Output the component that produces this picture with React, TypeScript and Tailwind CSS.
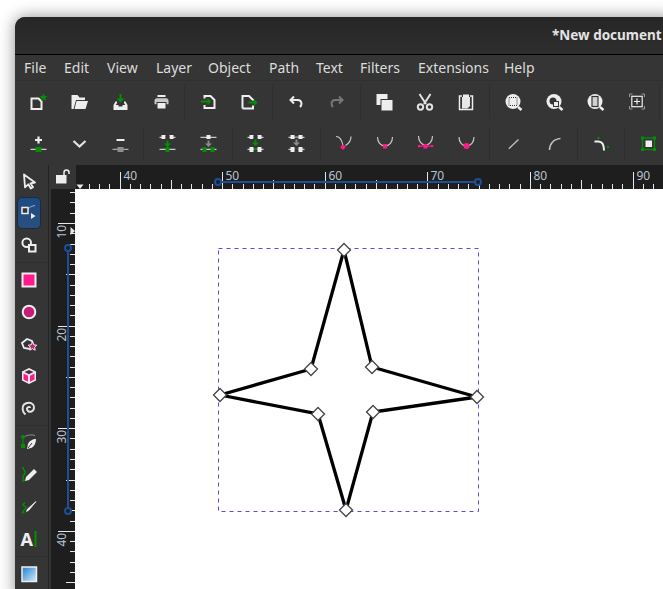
import React from "react";

const W = "#eeeeee";
const G = "#009000";
const P = "#ff1a8c";
const D = "#353535";

function Ic({ children }: { children: React.ReactNode }) {
  return (
    <svg width="24" height="24" viewBox="0 0 24 24" fill="none" className="block overflow-visible">
      {children}
    </svg>
  );
}

function Btn({ children }: { children: React.ReactNode }) {
  return <div className="w-[41px] h-[42px] shrink-0 flex items-center justify-center"><Ic>{children}</Ic></div>;
}

function Sep({ w = "w-[6px]" }: { w?: string }) {
  return (
    <div className={`${w} h-[42px] shrink-0 flex items-center justify-center`}>
      <div className="w-px h-[34px] bg-[#2e2e2e]" />
    </div>
  );
}

function Tool({ children, active }: { children: React.ReactNode; active?: boolean }) {
  return (
    <div className="w-[28px] h-[32px] flex items-center justify-center">
      {active ? (
        <div className="w-[24px] h-[32px] rounded-[5px] border border-[#1a2a40] bg-linear-to-b from-[#1d4a85] to-[#2a4f7d] flex items-center justify-center">
          <Ic>{children}</Ic>
        </div>
      ) : (
        <Ic>{children}</Ic>
      )}
    </div>
  );
}

function ToolSep() {
  return (
    <div className="h-[3px] flex items-center">
      <div className="w-[33px] h-px bg-[#2f2f2f]" />
    </div>
  );
}

const TopLine = ({ x = 3.5 }: { x?: number }) => <rect x={x} y="4.8" width="16" height="1" fill={W} />;
const BotLine = ({ x = 3.5 }: { x?: number }) => <rect x={x} y="16.8" width="16" height="1" fill={W} />;
const DownArrow = ({ fill }: { fill: string }) => <path d="M10.500 8.500h2v3h2.500l-3.500 3.500-3.500-3.500h2.500z" fill={fill} />;

const row1: (React.ReactNode | "sep")[] = [
  <g>
    <path d="M5.500 8.500h7l3 3v7.500h-10z" stroke={W} strokeWidth="2" />
    <path d="M17.500 3.500l1.100 2.600 2.800.2-2.100 1.800.7 2.700-2.500-1.500-2.500 1.500.7-2.700-2.100-1.800 2.800-.2z" fill={G} />
  </g>,
  <g fill={W}>
    <path d="M4.500 5h6l2 2.500h5.500V10H9L6.500 19h-2z" />
    <path d="M9.500 11h11.500l-2.500 8H7.500z" />
  </g>,
  <g>
    <path fillRule="evenodd" d="M5.500 15l2-3.500H9V13l-1.300 2h2.800v1.500h4V15h2.800L16 13v-1.500h1.500l2 3.500v5h-14z" fill={W} />
    <path d="M11.500 4h2v4.500h3l-4 4-4-4h3z" fill={G} />
  </g>,
  <g>
    <rect x="8.500" y="5" width="8" height="2" fill={W} />
    <path d="M5.500 10l1.500-1.700h11l1.500 1.700v4.300h-14z" fill="#c8c8c8" />
    <rect x="7.500" y="12" width="10" height="7" fill={D} />
    <rect x="8.500" y="13" width="8" height="5.500" fill={W} />
  </g>,
  "sep",
  <g>
    <path d="M8.500 8.500V6h6l4 4v8h-10v-3" stroke={W} strokeWidth="2" />
    <path d="M5 10.500h6.500V8l3.500 3.500-3.500 3.500v-2.500H5z" fill={G} />
  </g>,
  <g>
    <path d="M5.500 18.500V6h6.500l4 4v.5M16 15.500v3h-10.500" stroke={W} strokeWidth="2" />
    <path d="M11.500 11.500h5.500V9l3.500 3.500-3.500 3.500v-2.500h-5.500z" fill={G} />
  </g>,
  "sep",
  <g stroke={W} strokeWidth="2">
    <path d="M10 6.500L6.500 10l3.500 3.500" />
    <path d="M7 10h6.500a4 4 0 0 1 4 3.500c0 1.500-.5 2.500-1.500 3.500" />
  </g>,
  <g stroke="#777" strokeWidth="2">
    <path d="M14 6.500l3.500 3.500-3.500 3.500" />
    <path d="M17 10h-6.500a4 4 0 0 0-4 3.500c0 1.500.5 2.500 1.500 3.500" />
  </g>,
  "sep",
  <g>
    <rect x="4.500" y="4" width="11" height="11" fill={W} />
    <rect x="8.500" y="9" width="12" height="11.500" fill={D} />
    <rect x="9.500" y="10" width="11" height="10.500" fill={W} />
  </g>,
  <g stroke="#e2e2e2" strokeWidth="2">
    <path d="M6.500 4l6.500 10M17.500 4L11 14" />
    <circle cx="7.500" cy="17" r="2.700" />
    <circle cx="16.500" cy="17" r="2.700" />
  </g>,
  <g>
    <path d="M8 6H5.500v13.500h13V6H16" stroke={W} strokeWidth="1.500" />
    <path d="M8 7h8v9l-2.500 2.500H8z" fill="#e8e8e8" />
    <rect x="9" y="4.500" width="6" height="3" fill={W} />
  </g>,
  "sep",
  <g>
    <circle cx="12" cy="11.500" r="7.500" fill={W} />
    <path d="M17 17l3.500 3" stroke={W} strokeWidth="2.500" />
    <rect x="8" y="7.500" width="8" height="8" stroke={D} strokeWidth="1" strokeDasharray="1 1" />
  </g>,
  <g>
    <circle cx="12" cy="11.500" r="7.500" fill={W} />
    <path d="M17 17l3.500 3" stroke={W} strokeWidth="2.500" />
    <circle cx="11" cy="11" r="3.500" fill={D} />
    <rect x="11.500" y="11.500" width="5" height="5" fill={W} stroke={D} />
  </g>,
  <g>
    <circle cx="12" cy="11.500" r="7.500" fill={W} />
    <path d="M17 17l3.500 3" stroke={W} strokeWidth="2.500" />
    <rect x="9" y="6.500" width="6" height="10" fill="#d0d0d0" stroke={D} strokeWidth="1.200" />
  </g>,
  <g>
    <path d="M5.500 7V4h3M17.500 4h3v3M20.500 16v3h-3M8.500 19h-3v-3" stroke="#999" strokeWidth="1" />
    <rect x="7.800" y="6.300" width="10.400" height="10.400" stroke={W} strokeWidth="1.200" />
    <path d="M13 8.500v6M10 11.500h6" stroke={W} strokeWidth="1.200" />
  </g>,
  "sep",
];

const U = ({ x = 4.5, w = 15 }: { x?: number; w?: number }) => (
  <path d={`M${x} 5c0 5 3 9 ${w / 2} 9s${w / 2}-4 ${w / 2}-9`} stroke="#c8c8c8" strokeWidth="1.200" />
);

const row2: { n?: React.ReactNode; s?: string }[] = [
  { n: <g>
    <path d="M9 8h7M12.500 4.500v7" stroke={W} strokeWidth="2.200" />
    <rect x="4.500" y="16.800" width="16" height="1" fill={W} />
    <rect x="9.500" y="15" width="6" height="5" fill={G} />
  </g> },
  { n: <path d="M6.500 9l6 5.500 6-5.500" stroke="#e4e4e4" strokeWidth="2.200" /> },
  { n: <g>
    <rect x="8.500" y="7" width="8" height="2" fill={W} />
    <rect x="4.500" y="16.800" width="16" height="1" fill="#c8c8c8" />
    <rect x="9.500" y="15" width="6" height="5" fill="#8f8f8f" />
  </g> },
  { s: "w-[7px]" },
  { n: <g>
    <TopLine />
    <rect x="5.500" y="3" width="4" height="4" fill={W} /><rect x="13.500" y="3" width="4" height="4" fill={W} />
    <rect x="9.500" y="4" width="4" height="3" fill={D} />
    <DownArrow fill={G} />
    <BotLine />
    <rect x="9.500" y="15" width="4" height="5" fill={G} />
  </g> },
  { n: <g>
    <TopLine />
    <rect x="9.500" y="3" width="4" height="4" fill={W} />
    <DownArrow fill="#8a8a8a" />
    <BotLine />
    <rect x="5.500" y="15" width="4" height="5" fill={G} /><rect x="13.500" y="15" width="4" height="5" fill={G} />
  </g> },
  { s: "w-[6px]" },
  { n: <g>
    <TopLine />
    <rect x="5.500" y="3" width="4" height="4" fill={W} /><rect x="13.500" y="3" width="4" height="4" fill={W} />
    <rect x="9.500" y="4" width="4" height="3" fill={D} />
    <path d="M10.500 7.500h2v3h2.500l-3.500 3.500-3.500-3.500h2.500z" fill={G} />
    <BotLine />
    <rect x="9.500" y="16.500" width="4" height="1.500" fill={G} />
    <rect x="5.500" y="15" width="4" height="5" fill={W} /><rect x="13.500" y="15" width="4" height="5" fill={W} />
  </g> },
  { n: <g>
    <TopLine />
    <rect x="9.500" y="4.500" width="4" height="1.500" fill="#8a8a8a" />
    <rect x="5.500" y="3" width="4" height="4" fill={W} /><rect x="13.500" y="3" width="4" height="4" fill={W} />
    <path d="M10.500 7.500h2v3h2.500l-3.500 3.500-3.500-3.500h2.500z" fill="#8a8a8a" />
    <BotLine />
    <rect x="9.500" y="16.500" width="4" height="1.500" fill={D} />
    <rect x="5.500" y="15" width="4" height="5" fill={W} /><rect x="13.500" y="15" width="4" height="5" fill={W} />
  </g> },
  { s: "w-[6px]" },
  { n: <g>
    <path d="M4 4.500c4 0 6 4 7 9M19 4.500c0 4-2 7-5.500 9" stroke="#c8c8c8" strokeWidth="1.200" />
    <path d="M11 12.200l2.900 2.900-2.900 2.900-2.900-2.900z" fill={P} />
  </g> },
  { n: <g>
    <U x={4.5} w={15} />
    <rect x="10" y="12" width="4" height="4.500" fill={P} />
  </g> },
  { n: <g>
    <path d="M4.500 4c0 5 3 9 7 9s7-4 7-9" stroke="#c8c8c8" strokeWidth="1.200" />
    <rect x="9.500" y="12" width="4" height="4.500" fill={P} />
    <rect x="4.500" y="13.500" width="14" height="1.200" fill={P} />
    <rect x="4" y="13" width="2.200" height="2.200" fill={P} /><rect x="17" y="13" width="2.200" height="2.200" fill={P} />
  </g> },
  { n: <g>
    <U x={4} w={15} />
    <circle cx="11.500" cy="14" r="3" fill={P} />
  </g> },
  { s: "w-[5px]" },
  { n: <path d="M7.800 16.800L17.500 7.500" stroke="#c0c0c0" strokeWidth="1.300" /> },
  { n: <path d="M7.500 18c0-6 4-11 11-11.500" stroke="#c0c0c0" strokeWidth="1.500" /> },
  { s: "w-[6px]" },
  { n: <g>
    <path d="M5.500 9.500h4c3.500 0 5.500 3 5.500 9" stroke={W} strokeWidth="2" />
    <rect x="8.500" y="5" width="2" height="2" fill={G} /><rect x="18" y="14" width="2" height="2" fill={G} />
  </g> },
  { s: "w-[7px]" },
  { n: <g>
    <rect x="5.500" y="6" width="12" height="11.500" stroke={G} strokeWidth="1.200" />
    <rect x="8.500" y="8.500" width="6.500" height="6.500" fill={W} />
    {[[4, 4.5], [16, 4.5], [4, 16], [16, 16]].map(([x, y], i) => (
      <rect key={i} x={x} y={y} width="3" height="3" fill={G} />
    ))}
  </g> },
];

function HRuler() {
  const ticks: React.ReactNode[] = [];
  const unit = 10.26;
  for (let i = 37; i <= 93; i++) {
    const x = Math.round(119.5 + (i - 40) * unit) + 0.5;
    const major = i % 10 === 0;
    const mid = i % 5 === 0;
    ticks.push(<line key={i} x1={x} x2={x} y1={major ? 172 : mid ? 180 : 184} y2={189} stroke="#e8e8e8" strokeWidth="1" />);
    if (major) {
      ticks.push(
        <text key={`t${i}`} x={x + 3} y={180} fontSize="12" fill="#b8c4d4" fontFamily="Noto Sans, sans-serif">{i}</text>
      );
    }
  }
  return (
    <svg width="587" height="24" viewBox="76 165 587 24" className="block shrink-0">
      {ticks}
      <path d="M76.500 184.500h7l-3.500 4.500z" fill="#e8e8e8" />
      <line x1="218" x2="478" y1="182" y2="182" stroke="#1c4f96" strokeWidth="2" />
      <circle cx="218" cy="182" r="3" fill="#1e1e1e" stroke="#1c4f96" strokeWidth="2" />
      <circle cx="478" cy="182" r="3" fill="#1e1e1e" stroke="#1c4f96" strokeWidth="2" />
    </svg>
  );
}

function VRuler() {
  const ticks: React.ReactNode[] = [];
  const unit = 10.26;
  for (let i = 7; i <= 46; i++) {
    const y = Math.round(223 + (i - 10) * unit) + 0.5;
    const major = i % 10 === 0;
    const mid = i % 5 === 0;
    ticks.push(<line key={i} y1={y} y2={y} x1={major ? 58 : mid ? 66 : 70} x2={75} stroke="#e8e8e8" strokeWidth="1" />);
    if (major) {
      ticks.push(
        <text key={`t${i}`} x={66} y={y + 15} transform={`rotate(-90 66 ${y + 15})`} fontSize="12" fill="#b8c4d4" fontFamily="Noto Sans, sans-serif">{i}</text>
      );
    }
  }
  return (
    <svg width="24" height="399" viewBox="51 190 24 399" className="block shrink-0">
      {ticks}
      <path d="M70.500 227v8l4.500-4z" fill="#e8e8e8" />
      <line x1="68" x2="68" y1="248" y2="511" stroke="#1c4f96" strokeWidth="2" />
      <circle cx="68" cy="248" r="3" fill="#1e1e1e" stroke="#1c4f96" strokeWidth="2" />
      <circle cx="68" cy="511" r="3" fill="#1e1e1e" stroke="#1c4f96" strokeWidth="2" />
    </svg>
  );
}

function Canvas() {
  const nodes = [
    [344, 250], [372, 367], [477, 397], [373, 412], [346, 510], [318, 414], [220, 395], [311, 369],
  ];
  const pts = nodes.map((n) => n.join(",")).join(" ");
  return (
    <svg width="588" height="400" viewBox="75 189 588 400" className="block shrink-0">
      <rect x="218.500" y="248.500" width="260" height="263" fill="none" stroke="#5050dd" strokeWidth="1" strokeDasharray="4 4" />
      <polygon points={pts} fill="none" stroke="#000" strokeWidth="3.300" strokeLinejoin="miter" />
      {nodes.map(([x, y], i) => (
        <path key={i} d={`M${x} ${y - 6.5}L${x + 6.5} ${y}L${x} ${y + 6.5}L${x - 6.5} ${y}z`} fill="#fff" stroke="#444" strokeWidth="1.300" />
      ))}
    </svg>
  );
}

export default function App() {
  const menu: [string, string][] = [
    ["File", "w-[40px]"],
    ["Edit", "w-[43px]"],
    ["View", "w-[49px]"],
    ["Layer", "w-[52px]"],
    ["Object", "w-[61px]"],
    ["Path", "w-[47px]"],
    ["Text", "w-[44px]"],
    ["Filters", "w-[58px]"],
    ["Extensions", "w-[86px]"],
    ["Help", "w-[40px]"],
  ];
  return (
    <div className="w-[663px] h-[589px] overflow-hidden bg-white pt-[17px] pl-[15px] font-['Noto_Sans',sans-serif]">
      <div className="w-[660px] h-[580px] flex flex-col rounded-tl-[10px] overflow-hidden bg-[#353535] shadow-[0_0_16px_rgba(0,0,0,0.45)]">
        <div className="h-[37px] shrink-0 bg-linear-to-b from-[#262626] to-[#2e2e2e] pl-[537px] flex items-center whitespace-nowrap overflow-hidden">
          <span className="text-[13.5px] font-bold text-[#e4e4e4] leading-none">*New document</span>
        </div>
        <div className="h-px shrink-0 bg-black" />
        <div className="h-[26px] shrink-0 pl-[9px] flex items-center border-b border-[#303030] text-[14px] text-[#dcdcdc]">
          {menu.map(([m, w]) => (
            <span key={m} className={`${w} shrink-0`}>{m}</span>
          ))}
        </div>
        <div className="flex pl-[2px] shrink-0">
          {row1.map((n, i) => (n === "sep" ? <Sep key={i} /> : <Btn key={i}>{n}</Btn>))}
        </div>
        <div className="flex pl-[2px] shrink-0">
          {row2.map((r, i) => (r.s ? <Sep key={i} w={r.s} /> : <Btn key={i}>{r.n}</Btn>))}
        </div>
        <div className="flex flex-1 min-h-0">
          <div className="w-[33px] shrink-0 flex flex-col">
            <Tool>
              <path d="M7 5.500l11 8-4.500.8 2.500 4-2.200 1.200-2.500-4.200-3.300 3z" fill={D} stroke={W} strokeWidth="1.800" strokeLinejoin="round" />
            </Tool>
            <Tool active>
              <path d="M11 8c2-2 4-3 7-3.500" stroke="#b8c8e0" strokeWidth="0.800" />
              <rect x="5" y="6.500" width="6" height="6" fill={D} stroke={W} strokeWidth="1.500" />
              <path d="M14 12v6l4.500-3z" fill={W} />
            </Tool>
            <Tool>
              <circle cx="9.700" cy="9.700" r="4.300" stroke={W} strokeWidth="2" />
              <rect x="12" y="12" width="6.500" height="6.500" fill={D} stroke={W} strokeWidth="2" />
            </Tool>
            <ToolSep />
            <Tool>
              <rect x="5.500" y="5.500" width="13" height="13" fill={P} stroke={W} strokeWidth="2" />
            </Tool>
            <Tool>
              <circle cx="12" cy="12" r="6.300" fill="#c61e78" stroke={W} strokeWidth="2" />
            </Tool>
            <Tool>
              <path d="M5 11l5-4 5 2 1 3-3 5-6-1z" fill={D} stroke={W} strokeWidth="1.800" />
              <path d="M15.500 10l1.300 2.800 3 .4-2.200 2 .6 3-2.700-1.500-2.700 1.500.6-3-2.200-2 3-.4z" fill="#c61e78" stroke={W} strokeWidth="1" />
            </Tool>
            <Tool>
              <path d="M12 4l7 3.500v9L12 20l-7-3.500v-9z" fill={W} />
              <path d="M12 6l4.500 2-4.500 2.200L7.500 8z" fill="#5a2040" />
              <path d="M6.500 9.500l4.500 2.300v6l-4.500-2.300z" fill={P} />
              <path d="M17.500 9.500L13 11.800v6l4.500-2.300z" fill={P} />
            </Tool>
            <Tool>
              <path d="M13 12c0-1.500-2.500-1.500-3 .5s2 4 4.500 3 3.500-4.500 1.500-7-6.500-2.500-9 0-1.500 8 1.500 10" stroke="#e4e4e4" strokeWidth="2" />
            </Tool>
            <ToolSep />
            <Tool>
              <path d="M6 6.500c3-2 7-3.500 12-2" stroke="#9a9a9a" strokeWidth="0.900" />
              <path d="M6 6v9" stroke={G} strokeWidth="1.200" />
              <circle cx="6" cy="6" r="2" fill={G} />
              <rect x="4" y="13" width="4" height="4" fill={G} />
              <path d="M19 8c-3 0-7 2-8 5l-1 5 4-1c3-1 5-5 5-9z" fill={W} />
              <path d="M15 12l-4 5" stroke={D} strokeWidth="1" />
            </Tool>
            <Tool>
              <path d="M6 4c-1 3 3 3 2 6s-3 3-2 6" stroke={G} strokeWidth="1.500" />
              <path d="M4.500 19l4-1-2-2.500z" fill={G} />
              <path d="M17 6l3 3-8 8-4 1 1-4z" fill={W} />
            </Tool>
            <Tool>
              <path d="M8 8c-3 1-2 3 0 3.500S8 15 6 15.500" stroke={G} strokeWidth="1.500" />
              <path d="M4.500 19l3.500-1.500-2-2z" fill={G} />
              <path d="M19 6.500L12 15l-2.500 1.500L10.500 14z" fill={W} stroke={W} strokeWidth="0.800" />
            </Tool>
            <Tool>
              <text x="3.500" y="18.500" fontSize="18" fontWeight="700" fill={W} fontFamily="Noto Sans, sans-serif">A</text>
              <rect x="17.500" y="4" width="2" height="16" fill={G} />
            </Tool>
            <ToolSep />
            <Tool>
              <defs>
                <linearGradient id="gr" x1="0" y1="0" x2="1" y2="1">
                  <stop offset="0" stopColor="#1f7fd0" />
                  <stop offset="1" stopColor="#d8ecfa" />
                </linearGradient>
              </defs>
              <rect x="5" y="5" width="14.500" height="14.500" fill="url(#gr)" stroke={W} strokeWidth="1.500" />
            </Tool>
          </div>
          <div className="flex-1 min-w-0 flex flex-col">
            <div className="flex h-[24px] shrink-0">
              <div className="w-[28px] shrink-0 flex">
                <div className="w-px bg-[#242424]" />
                <div className="flex-1 flex items-center justify-center">
                  <svg width="18" height="18" viewBox="0 0 18 18" fill="none">
                    <rect x="2" y="7" width="10.500" height="8.500" fill={W} />
                    <path d="M10 7V4.500a2.500 2.500 0 0 1 5 0V6" stroke={W} strokeWidth="1.500" />
                  </svg>
                </div>
              </div>
              <div className="bg-[#1e1e1e] flex-1 min-w-0 overflow-hidden"><HRuler /></div>
            </div>
            <div className="flex flex-1 min-h-0">
              <div className="w-px shrink-0 bg-[#242424]" />
              <div className="w-[2px] shrink-0 bg-[#353535]" />
              <div className="w-[24px] shrink-0 bg-[#1e1e1e] overflow-hidden pt-px"><VRuler /></div>
              <div className="flex-1 min-w-0 bg-white overflow-hidden"><Canvas /></div>
            </div>
          </div>
        </div>
      </div>
    </div>
  );
}
